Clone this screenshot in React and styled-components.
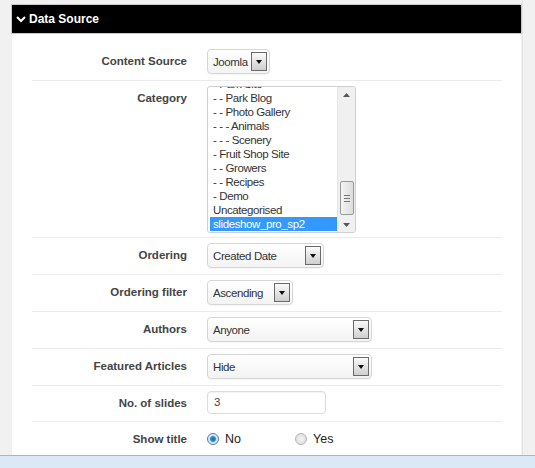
import React from "react";
import styled, { createGlobalStyle } from "styled-components";

const Global = createGlobalStyle`
  html, body { margin: 0; padding: 0; }
  body { background: #f1f1f1; font-family: "Liberation Sans", Arial, sans-serif; }
  #root { height: 468px; }
`;

const Page = styled.div`
  height: 468px;
  display: flex;
  flex-direction: column;
  overflow: hidden;
`;

const Main = styled.div`
  flex: 1;
  display: flex;
  min-height: 0;
`;

const Gutter = styled.div`
  width: ${(p) => p.$w}px;
  flex: ${(p) => (p.$grow ? 1 : "none")};
  background: #f1f1f1;
  border-left: ${(p) => (p.$grow ? "1px solid #e4e4e4" : "none")};
`;

const Panel = styled.div`
  width: 511px;
  flex: none;
  display: flex;
  flex-direction: column;
  padding-top: 4px;
  min-height: 0;
`;

const Header = styled.div`
  flex: none;
  height: 30px;
  box-sizing: border-box;
  background: #000;
  border: 1px solid #c9c9c9;
  display: flex;
  align-items: center;
  padding-left: 4px;
  gap: 3px;
  color: #fff;
  font-weight: bold;
  font-size: 12px;
`;

const Body = styled.div`
  flex: 1;
  min-height: 0;
  overflow: hidden;
  background: #fff;
  margin: 0 1px;
  padding: 10px 19px 0 20px;
`;

const Row = styled.div`
  display: flex;
  align-items: flex-start;
  padding: 5px 0 ${(p) => p.$pb ?? 6}px;
  border-top: 1px solid #ebebeb;
  &:first-child { border-top: none; }
`;

const Label = styled.div`
  width: 155px;
  flex: none;
  margin-right: 20px;
  text-align: right;
  line-height: 24px;
  font-size: 11.5px;
  font-weight: bold;
  color: #444;
`;

const SelectBox = styled.div`
  width: ${(p) => p.$w}px;
  height: 25px;
  box-sizing: border-box;
  display: flex;
  align-items: center;
  justify-content: space-between;
  padding: 0 2px 0 5px;
  border: 1px solid #d6d6d6;
  border-radius: 4px;
  background: linear-gradient(#ffffff, #f3f3f3);
  box-shadow: 0 1px 1px rgba(0, 0, 0, 0.04);
  font-size: 11.5px;
  letter-spacing: -0.4px;
  color: #333;
  white-space: nowrap;
`;

const DropBtn = styled.div`
  width: 16px;
  height: 19px;
  flex: none;
  box-sizing: border-box;
  border: 1px solid #6a6a6a;
  background: linear-gradient(#fafafa, #cfcfcf);
  display: flex;
  align-items: center;
  justify-content: center;
`;

const Tri = styled.div`
  width: 0;
  height: 0;
  border-left: 3.5px solid transparent;
  border-right: 3.5px solid transparent;
  border-top: 4px solid #111;
`;

const Input = styled.div`
  width: 119px;
  height: 23px;
  box-sizing: border-box;
  border: 1px solid #dcdcdc;
  border-radius: 4px;
  box-shadow: inset 0 1px 1px rgba(0, 0, 0, 0.05);
  padding-left: 6px;
  line-height: 21px;
  font-size: 11.5px;
  color: #444;
`;

const ListBox = styled.div`
  width: 149px;
  height: 147px;
  box-sizing: border-box;
  border: 1px solid #cfcfcf;
  border-radius: 3px;
  display: flex;
  overflow: hidden;
  background: #fff;
`;

const ListItems = styled.div`
  flex: 1;
  padding-left: 2px;
  overflow: hidden;
`;

const ListInner = styled.div`
  margin-top: -10px;
`;

const Item = styled.div`
  height: 14px;
  line-height: 14px;
  font-size: 11.5px;
  letter-spacing: -0.4px;
  padding-left: 3px;
  white-space: nowrap;
  color: ${(p) => (p.$sel ? "#fff" : "#333")};
  background: ${(p) => (p.$sel ? "#3399ff" : "transparent")};
`;

const ScrollBar = styled.div`
  width: 17px;
  flex: none;
  background: #f0f0f0;
  border-left: 1px solid #e6e6e6;
  display: flex;
  flex-direction: column;
  align-items: center;
`;

const ScrollArrow = styled.div`
  height: 15px;
  width: 100%;
  display: flex;
  align-items: center;
  justify-content: center;
`;

const Track = styled.div`
  flex: 1;
  width: 100%;
  display: flex;
  flex-direction: column;
  justify-content: flex-end;
  align-items: center;
`;

const Thumb = styled.div`
  width: 14px;
  height: 34px;
  box-sizing: border-box;
  border: 1px solid #9a9a9a;
  border-radius: 2px;
  background: linear-gradient(90deg, #f4f4f4, #dcdcdc);
  display: flex;
  flex-direction: column;
  align-items: center;
  justify-content: center;
  gap: 2px;
  margin-bottom: 2px;
`;

const Grip = styled.div`
  width: 6px;
  height: 1px;
  background: #777;
`;

const RadioGroup = styled.div`
  display: flex;
  align-items: center;
  height: 23px;
`;

const RadioOption = styled.label`
  width: 88px;
  display: flex;
  align-items: center;
  gap: 6px;
  font-size: 12.5px;
  color: #222;
`;

const RadioDot = styled.span`
  width: 12px;
  height: 12px;
  box-sizing: border-box;
  border-radius: 50%;
  border: 1px solid ${(p) => (p.$on ? "#5a7a96" : "#b5b5b5")};
  background: ${(p) =>
    p.$on
      ? "radial-gradient(circle, #0d6fb8 0, #2b8fd6 2.5px, #cfe3f2 3.5px, #eef5fb 6px)"
      : "radial-gradient(circle, #f4f4f4 0, #dcdcdc 6px)"};
`;

const StatusBar = styled.div`
  flex: none;
  height: 13px;
  box-sizing: border-box;
  background: #dbe8f6;
  border-top: 1px solid #a9b6c3;
`;

const Chevron = () => (
  <svg width="10" height="8" viewBox="0 0 10 8">
    <polyline points="1,2 5,6 9,2" fill="none" stroke="#fff" strokeWidth="2" />
  </svg>
);

const Select = ({ w, value }) => (
  <SelectBox $w={w}>
    <span>{value}</span>
    <DropBtn>
      <Tri />
    </DropBtn>
  </SelectBox>
);

const ArrowUp = () => (
  <svg width="7" height="4" viewBox="0 0 7 4">
    <polygon points="0,4 7,4 3.5,0" fill="#555" />
  </svg>
);
const ArrowDown = () => (
  <svg width="7" height="4" viewBox="0 0 7 4">
    <polygon points="0,0 7,0 3.5,4" fill="#555" />
  </svg>
);

const categories = [
  "- Park Site",
  "- - Park Blog",
  "- - Photo Gallery",
  "- - - Animals",
  "- - - Scenery",
  "- Fruit Shop Site",
  "- - Growers",
  "- - Recipes",
  "- Demo",
  "Uncategorised",
  "slideshow_pro_sp2",
];

export default function App() {
  return (
    <Page>
      <Global />
      <Main>
        <Gutter $w={11} />
        <Panel>
          <Header>
            <Chevron />
            <span>Data Source</span>
          </Header>
          <Body>
            <Row>
              <Label>Content Source</Label>
              <Select w={63} value="Joomla" />
            </Row>
            <Row $pb={4}>
              <Label>Category</Label>
              <ListBox>
                <ListItems>
                  <ListInner>
                    {categories.map((c, i) => (
                      <Item key={c} $sel={i === categories.length - 1}>
                        {c}
                      </Item>
                    ))}
                  </ListInner>
                </ListItems>
                <ScrollBar>
                  <ScrollArrow>
                    <ArrowUp />
                  </ScrollArrow>
                  <Track>
                    <Thumb>
                      <Grip />
                      <Grip />
                      <Grip />
                    </Thumb>
                  </Track>
                  <ScrollArrow>
                    <ArrowDown />
                  </ScrollArrow>
                </ScrollBar>
              </ListBox>
            </Row>
            <Row>
              <Label>Ordering</Label>
              <Select w={117} value="Created Date" />
            </Row>
            <Row>
              <Label>Ordering filter</Label>
              <Select w={86} value="Ascending" />
            </Row>
            <Row>
              <Label>Authors</Label>
              <Select w={165} value="Anyone" />
            </Row>
            <Row>
              <Label>Featured Articles</Label>
              <Select w={165} value="Hide" />
            </Row>
            <Row>
              <Label>No. of slides</Label>
              <Input>3</Input>
            </Row>
            <Row>
              <Label>Show title</Label>
              <RadioGroup>
                <RadioOption>
                  <RadioDot $on />
                  No
                </RadioOption>
                <RadioOption>
                  <RadioDot />
                  Yes
                </RadioOption>
              </RadioGroup>
            </Row>
          </Body>
        </Panel>
        <Gutter $grow />
      </Main>
      <StatusBar />
    </Page>
  );
}
